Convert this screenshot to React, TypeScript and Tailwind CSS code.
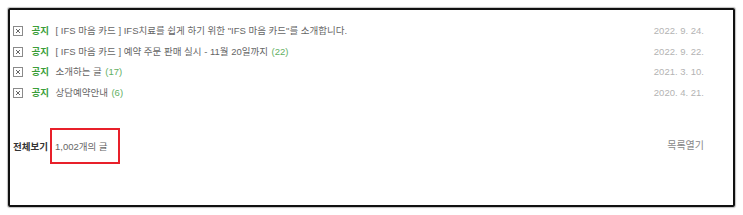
import React from "react";

const rows = [
  { title: '[ IFS 마음 카드 ] IFS치료를 쉽게 하기 위한 "IFS 마음 카드"를 소개합니다.', count: "", date: "2022. 9. 24." },
  { title: "[ IFS 마음 카드 ] 예약 주문 판매 실시 - 11월 20일까지", count: "(22)", date: "2022. 9. 22." },
  { title: "소개하는 글", count: "(17)", date: "2021. 3. 10." },
  { title: "상담예약안내", count: "(6)", date: "2020. 4. 21." },
];

function BrokenIcon() {
  return (
    <svg width="10" height="10" viewBox="0 0 10 10" className="shrink-0">
      <rect x="0.5" y="0.5" width="9" height="9" fill="#fff" stroke="#8a8a8a" />
      <path d="M3 3 L7 7 M7 3 L3 7" stroke="#666" strokeWidth="1" />
    </svg>
  );
}

export default function App() {
  return (
    <div
      className="w-[743px] h-[215px] bg-white p-[8px]"
      style={{ fontFamily: '"Liberation Sans", "Noto Sans CJK KR", sans-serif' }}
    >
      <div className="w-[727px] h-[199px] border-2 border-[#111] rounded-[2px] shadow-[0_0_1px_1px_rgba(0,0,0,0.25)] flex flex-col pl-[3px] pr-[29px]">
        <div className="flex flex-col pt-[10.5px]">
          {rows.map((r, i) => (
            <div key={i} className="flex items-center h-[20.7px] text-[9.5px] leading-none whitespace-pre">
              <BrokenIcon />
              <span className="ml-[8.5px] font-bold text-[#3a9e3a]">공지</span>
              <span className="ml-[6.5px] text-[#666]">{r.title}</span>
              {r.count && <span className="ml-[3.5px] text-[#62b062]">{r.count}</span>}
              <span className="ml-auto text-[#b3b3b3]">{r.date}</span>
            </div>
          ))}
        </div>
        <div className="flex items-center mt-[25px] text-[9.5px] leading-none whitespace-pre">
          <span className="font-bold text-[#333]">전체보기</span>
          <div className="ml-[2px] w-[70px] h-[36px] border-2 border-[#e8202a] flex items-center pl-[3px] text-[#666]">
            <span>1,002개의 글</span>
          </div>
          <span className="ml-auto text-[10px] text-[#888]">목록열기</span>
        </div>
      </div>
    </div>
  );
}
